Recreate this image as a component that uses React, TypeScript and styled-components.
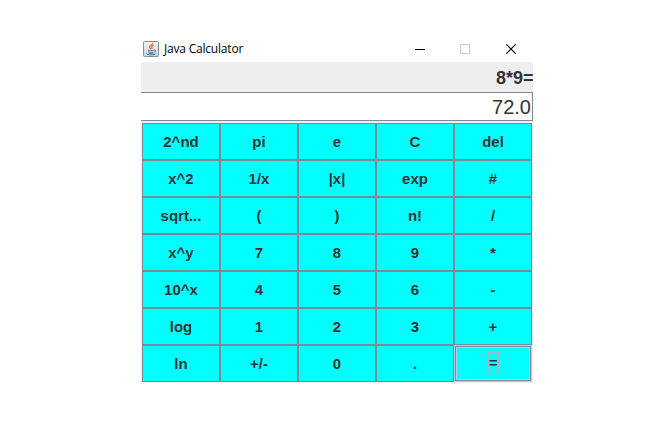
import React from "react";
import styled, { createGlobalStyle } from "styled-components";

const GlobalStyle = createGlobalStyle`
  body { margin: 0; background: #fff; }
  * { box-sizing: border-box; }
`;

const Desktop = styled.main`
  width: 670px;
  height: 426px;
  padding: 36px 0 0 141px;
  overflow: hidden;
  background: #fff;
`;

const Window = styled.section`
  width: 392px;
  height: 347px;
  display: flex;
  flex-direction: column;
  background: #eee;
  font-family: "Liberation Sans", Arial, sans-serif;
  color: #333;
`;

const TitleBar = styled.header`
  height: 26px;
  flex: none;
  display: flex;
  align-items: center;
  padding-left: 2px;
  background: #fff;
`;

const Title = styled.h1`
  margin: 0 0 0 5px;
  flex: 1;
  font: 400 12px/16px "Open Sans", "Noto Sans", sans-serif;
  letter-spacing: -0.2px;
  color: #000;
`;

const Controls = styled.div`
  display: flex;
  gap: 35px;
  margin-right: 17px;
`;

const Control = styled.button`
  width: 10px;
  height: 26px;
  flex: none;
  padding: 0;
  border: 0;
  background: none;
  display: flex;
  align-items: center;
  justify-content: center;

  &:last-child {
    margin-left: 1px;
  }
`;

const Expression = styled.div`
  height: 30px;
  flex: none;
  overflow: hidden;
  text-align: right;
  font-weight: 700;
  font-size: 18px;
  line-height: 32px;
`;

const ExpressionText = styled.span`
  margin-right: -0.5px;
`;

const Result = styled.output`
  height: 29px;
  flex: none;
  display: block;
  padding-right: 1px;
  background: #fff;
  border: solid #7a8a99;
  border-width: 1px 1px 1px 0;
  text-align: right;
  font-size: 20px;
  line-height: 29px;
`;

const Keypad = styled.div`
  margin: 2px 1px 0;
  display: grid;
  grid-template-columns: repeat(5, 78px);
  grid-auto-rows: 37px;
`;

const Key = styled.button<{ $focused?: boolean }>`
  padding: 0;
  border: 1px solid #7a8a99;
  background: #0ff;
  font: 700 15px/17px "Liberation Sans", Arial, sans-serif;
  color: #333;
  display: flex;
  align-items: center;
  justify-content: center;
  ${({ $focused }) =>
    $focused &&
    `border-color: #b8cfe5;
     box-shadow: inset 0 0 0 1px #7a8a99, inset 0 0 0 2px #b8cfe5;`}
`;

const FocusLabel = styled.span`
  width: 11px;
  height: 22px;
  margin: 0 0 1px 1px;
  border: 1px solid #a3b8cc;
  line-height: 20px;
  text-align: center;
`;

const keys = [
  "2^nd", "pi", "e", "C", "del",
  "x^2", "1/x", "|x|", "exp", "#",
  "sqrt...", "(", ")", "n!", "/",
  "x^y", "7", "8", "9", "*",
  "10^x", "4", "5", "6", "-",
  "log", "1", "2", "3", "+",
  "ln", "+/-", "0", ".", "=",
];

const JavaIcon = () => (
  <svg width="16" height="16" viewBox="0 0 16 16" fill="none">
    <defs>
      <linearGradient id="tile" x1="0" y1="0" x2="0" y2="1">
        <stop offset="0" stopColor="#f4f7f9" />
        <stop offset="1" stopColor="#c5d3df" />
      </linearGradient>
    </defs>
    <rect x=".5" y=".5" width="15" height="15" rx="1" fill="url(#tile)" stroke="#7890a6" />
    <path d="M9.6 1.8c.5 1.9-3.5 2.7-3 4.4.2.8 1 1.3 1.3 2.1M10.8 4.2c-1.7.6-2.6 1.4-2 2.3.5.7.3 1.2-.3 1.8" stroke="#ee7d22" strokeWidth="1.4" />
    <path d="M4.8 9.2c1.8.7 4.3.6 6 0M5.4 11c1.5.6 3.3.6 4.8 0M11 9.1c2.4-.5 2.2 1.7 0 2M3.7 12.6c-1 1.3 7.5 1.6 9 .3M5.6 12.4c1.5.4 3.4.4 4.8 0" stroke="#4f7999" />
  </svg>
);

export default function App() {
  return (
    <>
      <GlobalStyle />
      <Desktop>
        <Window>
          <TitleBar>
            <JavaIcon />
            <Title>Java Calculator</Title>
            <Controls>
              <Control aria-label="Minimize">
                <svg width="10" height="10" shapeRendering="crispEdges"><path d="M0 5.5h10" stroke="#000" /></svg>
              </Control>
              <Control aria-label="Maximize" disabled>
                <svg width="10" height="10" shapeRendering="crispEdges"><path d="M.5.5h9v9h-9z" fill="none" stroke="#ccc" /></svg>
              </Control>
              <Control aria-label="Close">
                <svg width="10" height="10"><path d="M.3.3l9.4 9.4M9.7.3L.3 9.7" stroke="#000" strokeWidth="1.1" /></svg>
              </Control>
            </Controls>
          </TitleBar>
          <Expression><ExpressionText>8*9=</ExpressionText></Expression>
          <Result>72.0</Result>
          <Keypad>
            {keys.map((label) => (
              <Key key={label} $focused={label === "="}>
                {label === "=" ? <FocusLabel>{label}</FocusLabel> : label}
              </Key>
            ))}
          </Keypad>
        </Window>
      </Desktop>
    </>
  );
}
